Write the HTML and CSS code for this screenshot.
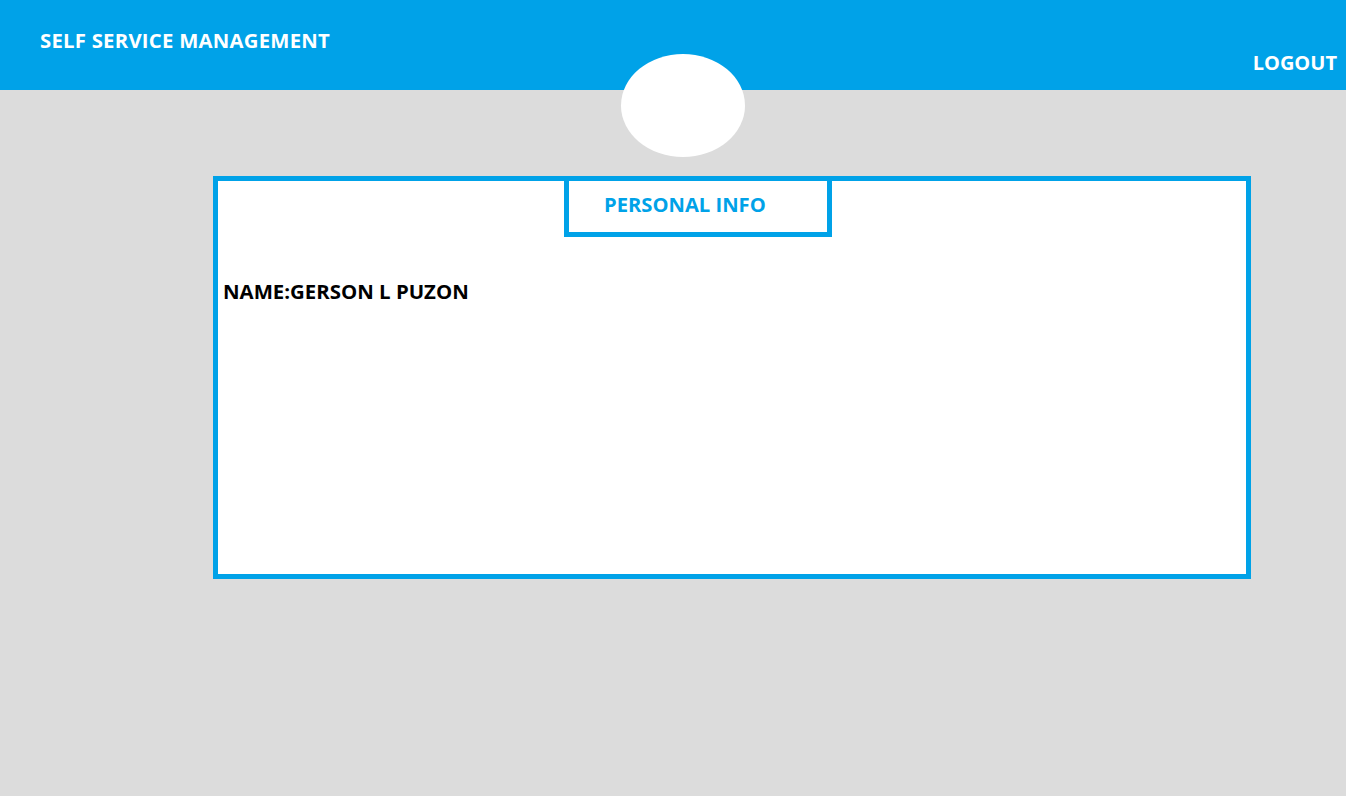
FILE: index.html
```html
<!DOCTYPE html>
<html>
<head>
<meta charset="utf-8">
<link rel="stylesheet" href="styles.css">
</head>
<body>
<header class="topbar">
  <span class="brand">SELF SERVICE MANAGEMENT</span>
  <span class="logout">LOGOUT</span>
</header>
<div class="avatar"></div>
<main class="content">
  <section class="card">
    <div class="tab"><span class="tab-label">PERSONAL INFO</span></div>
    <p class="name">NAME:GERSON L PUZON</p>
  </section>
</main>
</body>
</html>
```
FILE: styles.css
```css
html, body {
  margin: 0;
  padding: 0;
}
body {
  background: #dcdcdc;
  font-family: "Open Sans", "Liberation Sans", sans-serif;
  font-weight: 700;
  width: 1346px;
  height: 796px;
  position: relative;
  overflow: hidden;
}
.topbar {
  height: 90px;
  background: #00a2e8;
  color: #fff;
  display: flex;
  justify-content: space-between;
  box-sizing: border-box;
  padding: 0 9px 0 40px;
}
.brand {
  font-size: 20.3px;
  line-height: 20px;
  margin-top: 30px;
  letter-spacing: 0.26px;
}
.logout {
  font-size: 20px;
  line-height: 20px;
  margin-top: 53px;
}
.avatar {
  position: absolute;
  left: 621px;
  top: 54px;
  width: 124px;
  height: 103px;
  border-radius: 50%;
  background: #fff;
}
.content {
  padding: 86px 0 0 213px;
}
.card {
  width: 1038px;
  height: 403px;
  box-sizing: border-box;
  border: 5px solid #00a2e8;
  background: #fff;
}
.tab {
  margin: -5px 0 0 346px;
  width: 268px;
  height: 61px;
  box-sizing: border-box;
  border: 5px solid #00a2e8;
  padding: 13px 0 0 35px;
}
.tab-label {
  color: #00a2e8;
  font-size: 20.2px;
  line-height: 20px;
  display: block;
}
.name {
  margin: 44px 0 0 5px;
  font-size: 20.4px;
  line-height: 20px;
  color: #000;
}
```
